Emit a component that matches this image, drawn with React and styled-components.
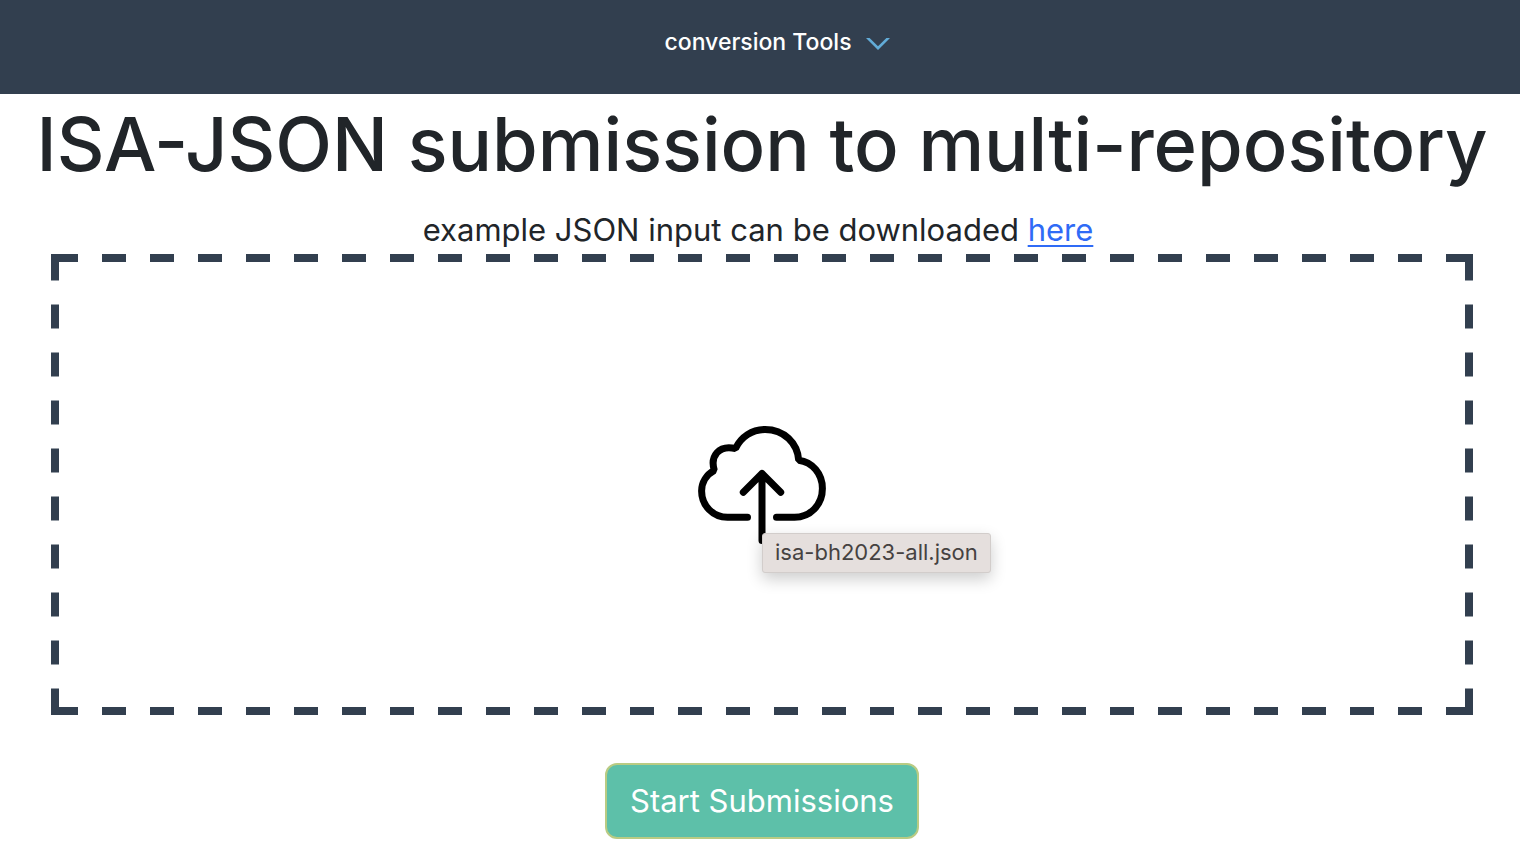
import React from "react";
import styled, { createGlobalStyle } from "styled-components";

const navy = "#323f4f";

const GlobalStyle = createGlobalStyle`
  *, *::before, *::after { box-sizing: border-box; }
  body {
    margin: 0;
    background: #fff;
    color: #212529;
    font-family: Inter, "Liberation Sans", sans-serif;
    font-size: 31px;
    line-height: 48px;
  }
`;

const NavBar = styled.nav`
  display: flex;
  justify-content: center;
  height: 94px;
  padding: 18px 0 28px 34px;
  background: ${navy};
`;

const NavToggle = styled.button`
  display: flex;
  align-items: center;
  gap: 14px;
  padding: 0;
  border: 0;
  background: none;
  color: #fff;
  font: 500 23px/48px Inter, "Liberation Sans", sans-serif;
  white-space: nowrap;
  cursor: pointer;
`;

const Content = styled.main`
  display: flex;
  flex-direction: column;
  align-items: center;
  padding: 2px 47px 28px 51px;
`;

const Title = styled.h1`
  margin: 0 -40px 14px;
  font-size: 74px;
  font-weight: 500;
  line-height: 96px;
  text-align: center;
  white-space: nowrap;
`;

const Hint = styled.p`
  margin: 0;
  padding-right: 8px;
`;

const HintLink = styled.a`
  color: #2f6bf6;
  text-decoration: underline;
  text-decoration-thickness: 2px;
  text-underline-offset: 4px;
`;

const DropZone = styled.label`
  position: relative;
  display: flex;
  align-items: center;
  justify-content: center;
  align-self: stretch;
  height: 461px;
  margin-bottom: 48px;
  cursor: pointer;
  --h: linear-gradient(90deg, ${navy} 12px, transparent 12px 36px, ${navy} 36px);
  --v: linear-gradient(180deg, ${navy} 12px, transparent 12px 36px, ${navy} 36px);
  background:
    var(--h) center top / 48px 8px repeat-x,
    var(--h) center bottom / 48px 8px repeat-x,
    var(--v) left center / 8px 48px repeat-y,
    var(--v) right center / 8px 48px repeat-y;

  /* Closes the corners where the two dash patterns meet. */
  &::before {
    content: "";
    position: absolute;
    inset: 0;
    --c: linear-gradient(${navy}, ${navy});
    background:
      var(--c) left top / 8px 8px no-repeat,
      var(--c) right top / 8px 8px no-repeat,
      var(--c) left bottom / 8px 8px no-repeat,
      var(--c) right bottom / 8px 8px no-repeat;
  }
`;

const FileInput = styled.input`
  position: absolute;
  width: 1px;
  height: 1px;
  opacity: 0;
`;

const DragLabel = styled.span`
  position: absolute;
  top: 279px;
  left: 50%;
  padding: 0 12px 2px;
  border: 1px solid #d2cdcb;
  border-radius: 3px;
  background: #e5dfdd;
  box-shadow: 0 6px 16px rgba(0, 0, 0, 0.2);
  color: #454241;
  font-size: 22px;
  line-height: 36px;
  white-space: nowrap;
`;

const SubmitButton = styled.button`
  padding: 12px 23px;
  border: 2px solid #b9cb83;
  border-radius: 12px;
  background: #5dc0a9;
  color: #fff;
  font: 400 31px/48px Inter, "Liberation Sans", sans-serif;
  white-space: nowrap;
  cursor: pointer;
`;

function Chevron() {
  return (
    <svg width="24" height="16" viewBox="0 0 24 16" aria-hidden="true">
      <path d="M0 4 H3.6 L12 12.2 L20.4 4 H24 L12 16 Z" fill="#62acd8" />
    </svg>
  );
}

function CloudUpload() {
  return (
    <svg
      width="128"
      height="120"
      viewBox="698 425 128 120"
      fill="none"
      stroke="#000"
      strokeWidth="7"
      strokeLinecap="round"
      strokeLinejoin="round"
      role="img"
      aria-label="Upload file"
    >
      <path
        strokeLinejoin="bevel"
        d="M747.5 517.3 H727.5 C713 517.3 701.6 505.5 701.6 491 C701.6 482.5 706.5 474.5 714.3 470.3 C710 456.5 718.5 444.5 735.5 448.5 C741 437 752 429.5 765 429.5 C784 429.5 797.5 443 798.7 460.3 C812.5 462 822.4 474 822.4 488.5 C822.4 505 810 517.3 794.5 517.3 H776.5"
      />
      <path d="M762 473.5 V540.5 M743.3 492.2 L762 473.5 L780.7 492.2" />
    </svg>
  );
}

export default function App() {
  return (
    <>
      <GlobalStyle />
      <NavBar>
        <NavToggle type="button">
          conversion Tools
          <Chevron />
        </NavToggle>
      </NavBar>
      <Content>
        <Title>ISA-JSON submission to multi-repository</Title>
        <Hint>
          example JSON input can be downloaded <HintLink href="#example">here</HintLink>
        </Hint>
        <DropZone>
          <FileInput type="file" accept=".json" />
          <CloudUpload />
          <DragLabel>isa-bh2023-all.json</DragLabel>
        </DropZone>
        <SubmitButton type="button">Start Submissions</SubmitButton>
      </Content>
    </>
  );
}
